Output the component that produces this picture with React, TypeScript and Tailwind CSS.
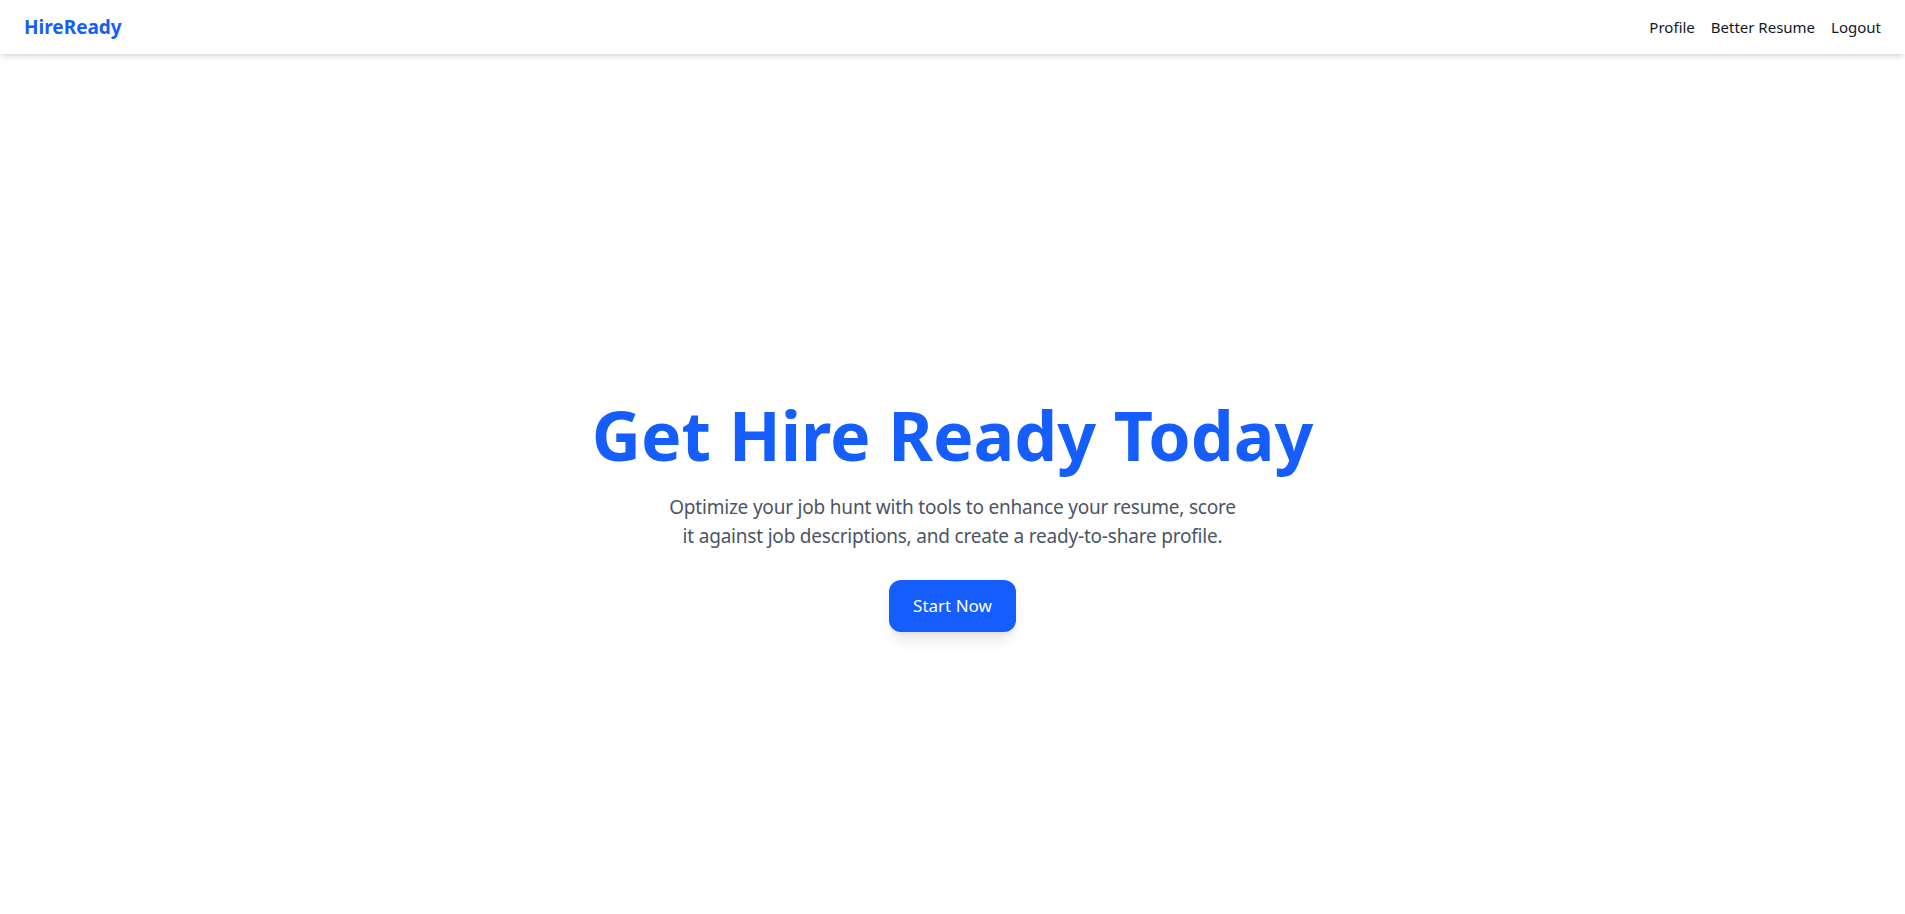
import React from "react";

export default function App() {
  const font = { fontFamily: '"Segoe UI", "Noto Sans", "Open Sans", sans-serif' };
  return (
    <div className="min-h-screen bg-white" style={font}>
      <nav className="flex h-[54px] items-center justify-between bg-white px-6 shadow-md">
        <div className="text-[19px] font-bold text-blue-600">HireReady</div>
        <div className="flex items-center gap-4 text-[15px] text-gray-900">
          <a href="#">Profile</a>
          <a href="#">Better Resume</a>
          <a href="#">Logout</a>
        </div>
      </nav>
      <main className="flex flex-col items-center px-4 pt-[347px] pb-[280px] text-center">
        <h1 className="text-[68px] leading-none font-bold text-blue-600">Get Hire Ready Today</h1>
        <p className="mt-6 text-[19px] leading-[29px] tracking-[-0.2px] text-gray-600">
          Optimize your job hunt with tools to enhance your resume, score
          <br />
          it against job descriptions, and create a ready-to-share profile.
        </p>
        <button className="mt-[29px] h-[52px] w-[127px] rounded-xl bg-blue-600 text-[17px] text-white shadow-lg">
          Start Now
        </button>
      </main>
    </div>
  );
}
